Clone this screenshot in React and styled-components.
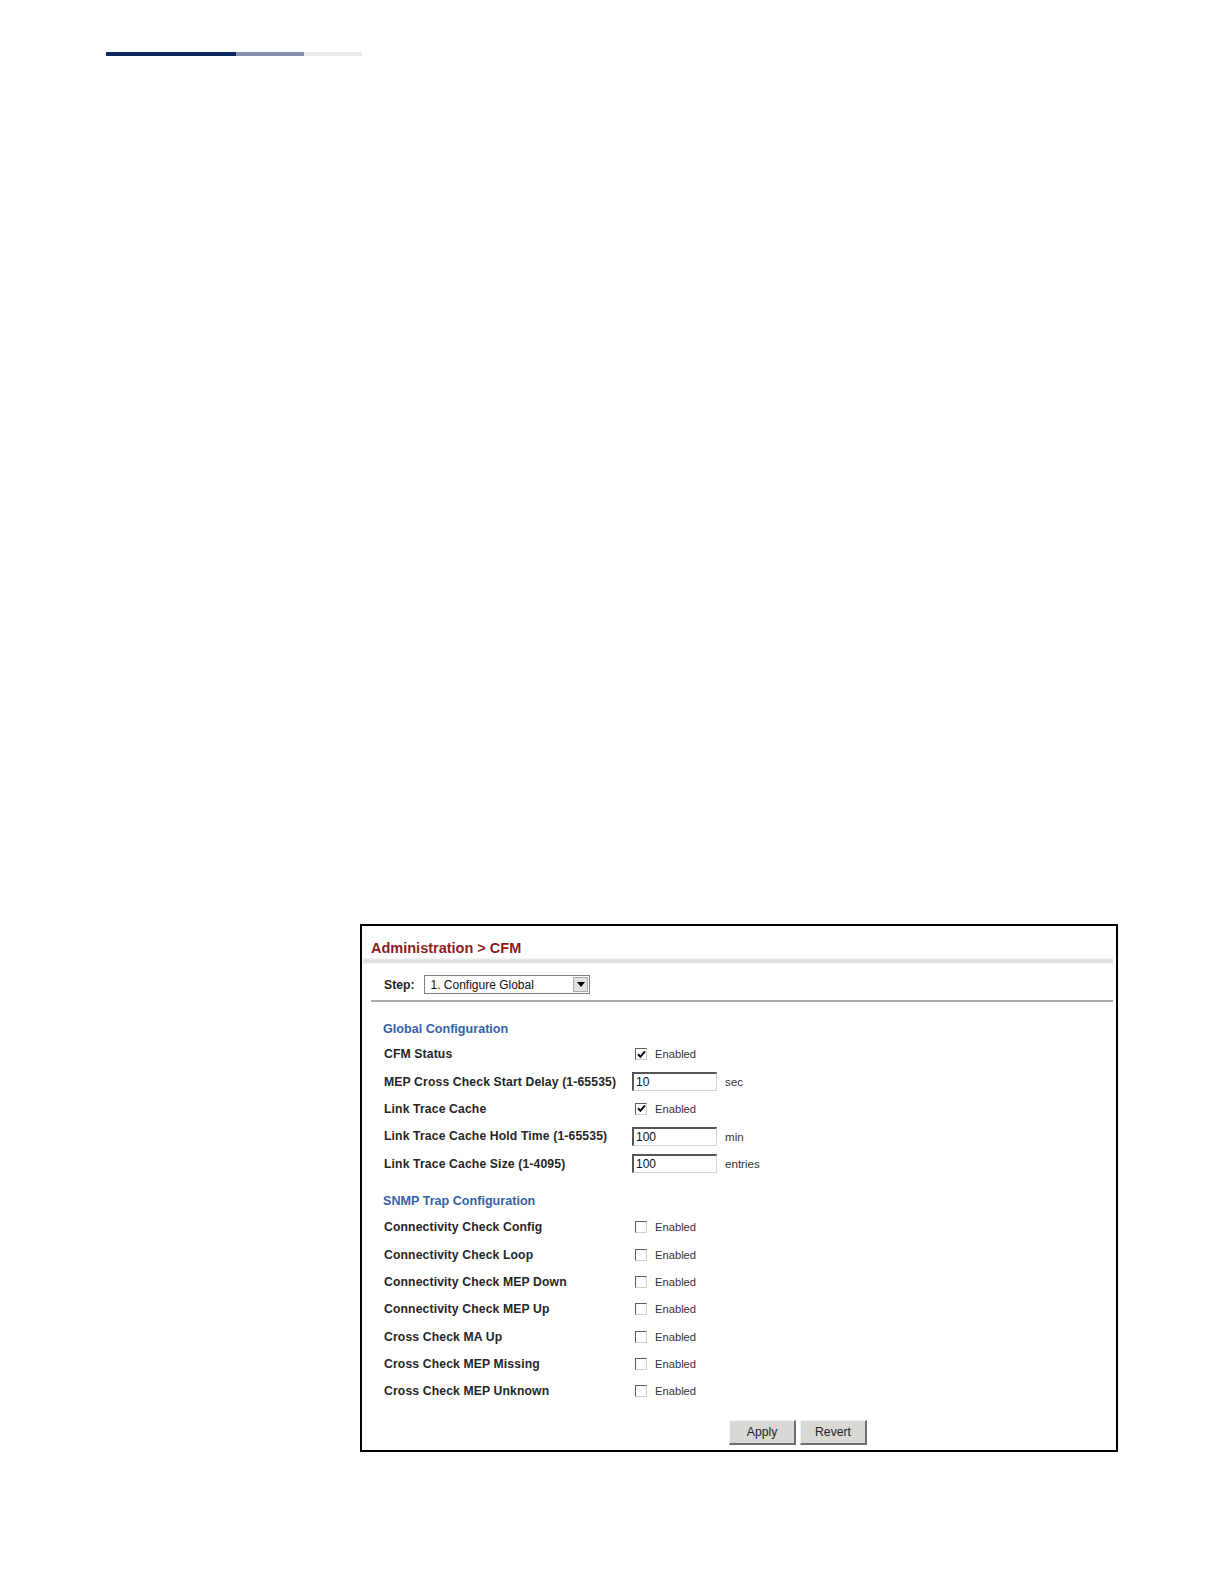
import React from 'react';
import { styled, createGlobalStyle } from 'styled-components';

const GlobalStyle = createGlobalStyle`
  html, body {
    margin: 0;
    padding: 0;
    background: #fff;
  }
  body {
    font-family: "Liberation Sans", Arial, sans-serif;
    color: #222;
  }
`;

const globalRows = [
  { label: 'CFM Status', kind: 'check', checked: true },
  { label: 'MEP Cross Check Start Delay (1-65535)', kind: 'text', value: '10', unit: 'sec' },
  { label: 'Link Trace Cache', kind: 'check', checked: true },
  { label: 'Link Trace Cache Hold Time (1-65535)', kind: 'text', value: '100', unit: 'min' },
  { label: 'Link Trace Cache Size (1-4095)', kind: 'text', value: '100', unit: 'entries' },
];

const trapRows = [
  'Connectivity Check Config',
  'Connectivity Check Loop',
  'Connectivity Check MEP Down',
  'Connectivity Check MEP Up',
  'Cross Check MA Up',
  'Cross Check MEP Missing',
  'Cross Check MEP Unknown',
];

const CheckMark = () => (
  <svg width="9" height="9" viewBox="0 0 9 9">
    <path d="M1 4.2 L3.4 6.8 L8 1.4" fill="none" stroke="#111" strokeWidth="2" />
  </svg>
);

const Row = ({ row }) => (
  <FieldRow>
    <Label>{row.label}</Label>
    <Value>
      {row.kind === 'check' ? (
        <>
          <Box>{row.checked && <CheckMark />}</Box>
          <Small>Enabled</Small>
        </>
      ) : (
        <>
          <TextField>{row.value}</TextField>
          <Unit>{row.unit}</Unit>
        </>
      )}
    </Value>
  </FieldRow>
);

const App = () => {
  return (
    <>
      <GlobalStyle />
      <Page>
        <RuleBar>
          <RuleSegment $w={130} $c="#0d2561" />
          <RuleSegment $w={68} $c="#8591ae" />
          <RuleSegment $w={58} $c="#e8e9ec" />
        </RuleBar>

        <Frame>
          <Title>Administration &gt; CFM</Title>
          <Band />
          <StepRow>
            <StepLabel>Step:</StepLabel>
            <Select>
              <span>1. Configure Global</span>
              <SelectArrow />
            </Select>
          </StepRow>
          <Divider />

          <SectionTitle $top={18.5}>Global Configuration</SectionTitle>
          {globalRows.map((r) => (
            <Row key={r.label} row={r} />
          ))}

          <SectionTitle $top={16}>SNMP Trap Configuration</SectionTitle>
          {trapRows.map((label) => (
            <Row key={label} row={{ label, kind: 'check', checked: false }} />
          ))}

          <Buttons>
            <Button>Apply</Button>
            <Button>Revert</Button>
          </Buttons>
        </Frame>
      </Page>
    </>
  );
};

export default App;

const Page = styled.div`
  padding-top: 52px;
  width: 1224px;
  height: 1584px;
  box-sizing: border-box;
`;

const RuleBar = styled.div`
  display: flex;
  margin-left: 106px;
  height: 4px;
`;

const RuleSegment = styled.div`
  width: ${(p) => p.$w}px;
  background: ${(p) => p.$c};
`;

const Frame = styled.section`
  margin: 868px 0 0 360px;
  width: 758px;
  height: 528px;
  box-sizing: border-box;
  border: 2px solid #000;
  display: flex;
  flex-direction: column;
`;

const Title = styled.h1`
  margin: 12.5px 0 0 9px;
  font-size: 14.5px;
  line-height: 18px;
  font-weight: bold;
  color: #8c1d22;
`;

const Band = styled.div`
  margin: 1.5px 3px 0 1px;
  height: 6px;
  background: linear-gradient(#f6f6f6, #d8d8d8 50%, #f6f6f6);
`;

const StepRow = styled.div`
  display: flex;
  align-items: center;
  height: 19px;
  margin: 11px 0 0 22px;
  gap: 10px;
`;

const StepLabel = styled.span`
  font-size: 12.2px;
  font-weight: bold;
  color: #222;
`;

const Select = styled.div`
  display: flex;
  align-items: center;
  justify-content: space-between;
  box-sizing: border-box;
  width: 166px;
  height: 19px;
  border: 1px solid #7f7f7f;
  padding: 0 1px 0 5px;
  font-size: 12px;
  color: #111;
`;

const SelectArrow = styled.span`
  width: 15px;
  height: 15px;
  box-sizing: border-box;
  background: #e2e2e2;
  border: 1px solid #aaa;
  display: flex;
  align-items: center;
  justify-content: center;
  &::after {
    content: '';
    border-left: 4px solid transparent;
    border-right: 4px solid transparent;
    border-top: 5px solid #000;
  }
`;

const Divider = styled.div`
  margin: 6px 3px 0 9px;
  height: 2px;
  background: #ababab;
`;

const SectionTitle = styled.h2`
  margin: ${(p) => p.$top}px 0 4px 21px;
  font-size: 12.6px;
  line-height: 16px;
  font-weight: bold;
  color: #3462aa;
`;

const FieldRow = styled.div`
  display: flex;
  align-items: center;
  height: 27.4px;
  padding-left: 22px;
`;

const Label = styled.span`
  width: 248px;
  font-size: 12.2px;
  font-weight: bold;
  letter-spacing: 0.13px;
  color: #262626;
  white-space: nowrap;
`;

const Value = styled.div`
  display: flex;
  align-items: center;
`;

const Box = styled.span`
  margin-left: 3px;
  width: 12px;
  height: 12px;
  box-sizing: border-box;
  border-top: 1px solid #5a5a5a;
  border-left: 1px solid #5a5a5a;
  border-right: 1px solid #d0d0d0;
  border-bottom: 1px solid #d0d0d0;
  background: #fff;
  display: flex;
  align-items: center;
  justify-content: center;
`;

const Small = styled.span`
  margin-left: 8px;
  font-size: 11.2px;
  color: #333;
`;

const TextField = styled.span`
  width: 85px;
  height: 19px;
  box-sizing: border-box;
  border-top: 2px solid #555;
  border-left: 2px solid #555;
  border-right: 1px solid #d4d4d4;
  border-bottom: 1px solid #d4d4d4;
  padding: 1px 0 0 2px;
  font-size: 12px;
  line-height: 15px;
  color: #111;
`;

const Unit = styled.span`
  margin-left: 8px;
  font-size: 11.6px;
  color: #333;
`;

const Buttons = styled.div`
  display: flex;
  gap: 4px;
  margin: 14.5px 0 0 367px;
`;

const Button = styled.button`
  width: 67px;
  height: 25px;
  box-sizing: border-box;
  background: #d9d8d4;
  border-top: 1px solid #f4f4f4;
  border-left: 1px solid #f4f4f4;
  border-right: 2px solid #6e6e6e;
  border-bottom: 2px solid #6e6e6e;
  font-family: "Liberation Sans", Arial, sans-serif;
  font-size: 12.2px;
  color: #222;
  padding: 0;
`;
